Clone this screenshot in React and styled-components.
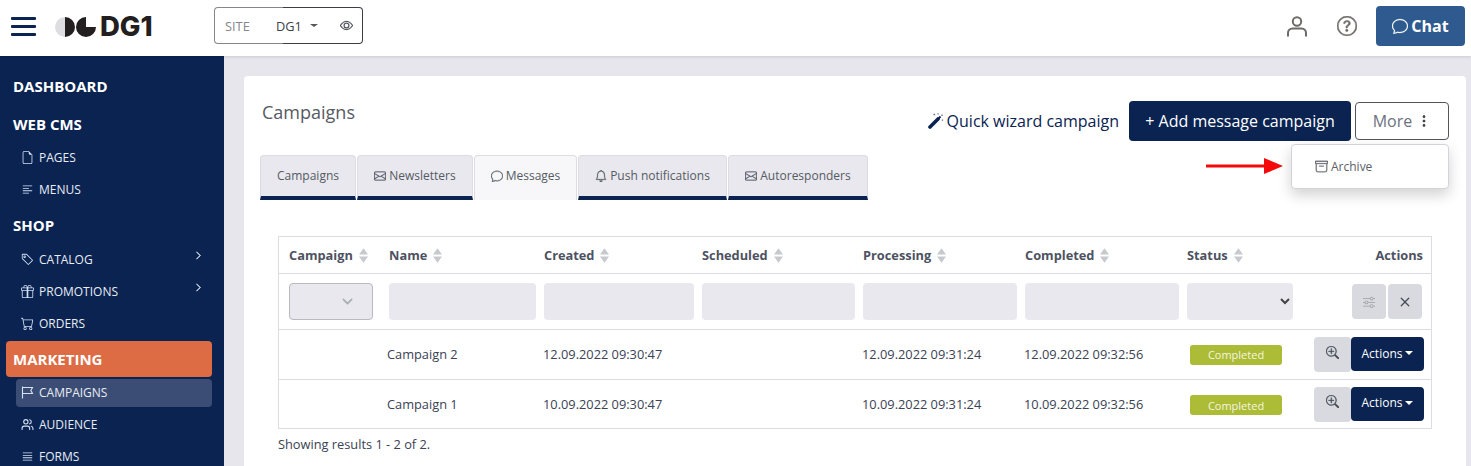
import React from "react";
import styled, { createGlobalStyle } from "styled-components";
import { Users } from "lucide-react";
import {
  BsArchive,
  BsBell,
  BsCart,
  BsChat,
  BsChevronDown,
  BsChevronRight,
  BsEnvelope,
  BsEye,
  BsFileEarmark,
  BsGift,
  BsJustify,
  BsQuestionCircle,
  BsSliders,
  BsTag,
  BsTextLeft,
  BsThreeDotsVertical,
  BsX,
  BsZoomIn
} from "react-icons/bs";

const NAVY = "#0a2351";

const GlobalStyle = createGlobalStyle`
  html, body {
    margin: 0;
    height: 466px;
    overflow: hidden;
    background: #e6e6ec;
    font-family: "Open Sans", "Noto Sans", sans-serif;
  }
  * {
    box-sizing: border-box;
  }
`;

const columns = ["Campaign", "Name", "Created", "Scheduled", "Processing", "Completed", "Status"];

const rows = [
  { name: "Campaign 2", created: "12.09.2022 09:30:47", processing: "12.09.2022 09:31:24", completed: "12.09.2022 09:32:56" },
  { name: "Campaign 1", created: "10.09.2022 09:30:47", processing: "10.09.2022 09:31:24", completed: "10.09.2022 09:32:56" }
];

const tabs = [
  { label: "Campaigns", width: 96 },
  { label: "Newsletters", icon: <BsEnvelope />, width: 116 },
  { label: "Messages", icon: <BsChat />, width: 103, active: true },
  { label: "Push notifications", icon: <BsBell />, width: 149 },
  { label: "Autoresponders", icon: <BsEnvelope />, width: 140 }
];

function SortIcon() {
  return (
    <SortSvg viewBox="0 0 10 16">
      <path d="M5 0 L10 7 H0 Z M5 16 L0 9 H10 Z" fill="#c8c9ce" />
    </SortSvg>
  );
}

function Logo() {
  return (
    <LogoWrap>
      <svg width="41" height="20" viewBox="0 0 41 20">
        <path d="M10 0 A10 10 0 0 0 10 20 Z" fill="#dedee2" />
        <path d="M10 0 A10 10 0 0 1 10 20 Z" fill="#231f20" />
        <path d="M31 0 A10 10 0 1 0 41 10 H31 Z" fill="#231f20" />
      </svg>
      <LogoText>DG1</LogoText>
    </LogoWrap>
  );
}

function UserIcon() {
  return (
    <svg width="20" height="21" viewBox="0 0 20 21" fill="none" stroke="currentColor" strokeWidth="2">
      <circle cx="10" cy="5.5" r="4.2" />
      <path d="M1 20.5 V17 a4.5 4.5 0 0 1 4.5-4.5 h9 a4.5 4.5 0 0 1 4.5 4.5 v3.5" />
    </svg>
  );
}

function FlagIcon() {
  return (
    <svg viewBox="0 0 13 13" fill="none" stroke="currentColor" strokeWidth="1.1">
      <path d="M1.5 0.5 V12.5 M1.5 1.5 H11.5 L9.8 4.5 L11.5 7.5 H1.5" />
    </svg>
  );
}

function WandIcon() {
  return (
    <svg width="16" height="16" viewBox="0 0 16 16">
      <path d="M2 14 L10 6" stroke={NAVY} strokeWidth="3.6" strokeLinecap="round" />
      <path d="M10 6 L12.5 3.5" stroke={NAVY} strokeWidth="2" />
      <path d="M5.5 1.5 h1.6 M9.5 0.8 h1.2 M14 1.5 v1.6 M14.5 6.5 v1.3" stroke="#5d6b88" strokeWidth="1.3" />
    </svg>
  );
}

export default function App() {
  return (
    <Page>
      <GlobalStyle />
      <Header>
        <Burger>
          <span />
          <span />
          <span />
        </Burger>
        <Logo />
        <SitePicker>
          <SiteLabel>SITE</SiteLabel>
          <SiteValue>DG1</SiteValue>
          <SiteCaret />
          <EyeIcon />
        </SitePicker>
        <HeaderRight>
          <HeaderIcon>
            <UserIcon />
          </HeaderIcon>
          <HeaderIcon>
            <HelpIcon />
          </HeaderIcon>
          <ChatButton>
            <BsChat />
            Chat
          </ChatButton>
        </HeaderRight>
      </Header>

      <Body>
        <Sidebar>
          <Heading $top={17}>DASHBOARD</Heading>
          <Heading $top={10}>WEB CMS</Heading>
          <NavItem $top={2}><BsFileEarmark />PAGES</NavItem>
          <NavItem><BsTextLeft />MENUS</NavItem>
          <Heading $top={7}>SHOP</Heading>
          <NavItem $top={3}><BsTag />CATALOG<NavChevron /></NavItem>
          <NavItem><BsGift />PROMOTIONS<NavChevron /></NavItem>
          <NavItem><BsCart />ORDERS</NavItem>
          <ActiveHeading>MARKETING</ActiveHeading>
          <ActiveItem><FlagIcon />CAMPAIGNS</ActiveItem>
          <NavItem $top={1}><Users strokeWidth={2} />AUDIENCE</NavItem>
          <NavItem><BsJustify />FORMS</NavItem>
        </Sidebar>

        <Main>
          <Card>
            <TopRow>
              <Title>Campaigns</Title>
              <TopActions>
                <WizardLink><WandIcon />Quick wizard campaign</WizardLink>
                <AddButton>+ Add message campaign</AddButton>
                <MoreWrap>
                  <MoreButton>More<BsThreeDotsVertical /></MoreButton>
                  <Arrow width="78" height="16" viewBox="0 0 78 16">
                    <path d="M1 8 H58" stroke="#f40a0a" strokeWidth="3" strokeLinecap="round" />
                    <path d="M58 0 L77 8 L58 16 Z" fill="#f40a0a" />
                  </Arrow>
                  <Dropdown>
                    <BsArchive />
                    Archive
                  </Dropdown>
                </MoreWrap>
              </TopActions>
            </TopRow>

            <Tabs>
              {tabs.map((tab) => (
                <Tab key={tab.label} $active={tab.active} $width={tab.width}>
                  {tab.icon}
                  {tab.label}
                </Tab>
              ))}
            </Tabs>

            <Table>
              <HeadRow>
                {columns.map((col) => (
                  <HeadCell key={col}>
                    {col}
                    <SortIcon />
                  </HeadCell>
                ))}
                <ActionsHead>Actions</ActionsHead>
              </HeadRow>
              <FilterRow>
                <FilterCell>
                  <CampaignSelect>
                    <BsChevronDown />
                  </CampaignSelect>
                </FilterCell>
                <FilterCell><FilterInput /></FilterCell>
                <FilterCell><FilterInput /></FilterCell>
                <FilterCell><FilterInput /></FilterCell>
                <FilterCell><FilterInput /></FilterCell>
                <FilterCell><FilterInput /></FilterCell>
                <FilterCell><StatusSelect /></FilterCell>
                <FilterButtons>
                  <GrayButton $muted><BsSliders /></GrayButton>
                  <GrayButton><BsX /></GrayButton>
                </FilterButtons>
              </FilterRow>
              {rows.map((row) => (
                <DataRow key={row.name}>
                  <DataCell />
                  <NameCell>{row.name}</NameCell>
                  <DataCell>{row.created}</DataCell>
                  <DataCell />
                  <DataCell>{row.processing}</DataCell>
                  <DataCell>{row.completed}</DataCell>
                  <DataCell><StatusBadge>Completed</StatusBadge></DataCell>
                  <RowButtons>
                    <ZoomButton><BsZoomIn /></ZoomButton>
                    <ActionsButton>Actions<Caret /></ActionsButton>
                  </RowButtons>
                </DataRow>
              ))}
            </Table>
            <Results>Showing results 1 - 2 of 2.</Results>
          </Card>
        </Main>
      </Body>
    </Page>
  );
}

const Page = styled.div`
  width: 1471px;
  height: 466px;
  overflow: hidden;
`;

const Header = styled.header`
  position: relative;
  z-index: 2;
  display: flex;
  align-items: center;
  height: 56px;
  padding: 0 6px 0 11px;
  background: #fff;
  box-shadow: 0 1px 3px rgba(0, 0, 0, 0.12);
`;

const Burger = styled.div`
  display: flex;
  flex-direction: column;
  gap: 5.5px;
  width: 25px;
  margin-bottom: 3px;

  span {
    height: 2.5px;
    background: ${NAVY};
    border-radius: 1px;
  }
`;

const LogoWrap = styled.div`
  display: flex;
  align-items: center;
  gap: 4px;
  width: 100px;
  margin: 0 0 2px 19px;
`;

const LogoText = styled.span`
  font-family: "Inter", sans-serif;
  font-weight: 800;
  font-size: 27.5px;
  line-height: 1;
  color: #231f20;
`;

const SitePicker = styled.div`
  display: flex;
  align-items: center;
  width: 149px;
  height: 37px;
  margin: 0 0 5px 59px;
  padding-left: 10px;
  border: 1px solid transparent;
  border-radius: 4px;
  background:
    linear-gradient(#fff, #fff) padding-box,
    linear-gradient(90deg, #85868c 0 46%, #3d3e44 46%) border-box;
`;

const SiteLabel = styled.span`
  width: 51px;
  font-size: 12.8px;
  color: #85878d;
`;

const SiteValue = styled.span`
  font-size: 12.8px;
  color: #3d4048;
`;

const Caret = styled.span`
  display: inline-block;
  margin-left: 3px;
  border-top: 4px solid currentColor;
  border-left: 4px solid transparent;
  border-right: 4px solid transparent;
`;

const SiteCaret = styled(Caret)`
  margin-left: 8px;
  border-top-width: 3px;
  color: #55575d;
`;

const EyeIcon = styled(BsEye)`
  margin-left: 22px;
  font-size: 13px;
  color: #3d4048;
  stroke: currentColor;
  stroke-width: 0.3;
`;

const HeaderRight = styled.div`
  display: flex;
  align-items: center;
  margin: 0 0 4px auto;
`;

const HeaderIcon = styled.span`
  display: flex;
  justify-content: center;
  width: 50px;
  color: #6e6a68;
`;

const HelpIcon = styled(BsQuestionCircle)`
  font-size: 20px;
  stroke: currentColor;
  stroke-width: 0.4;
`;

const ChatButton = styled.button`
  display: flex;
  align-items: center;
  justify-content: center;
  gap: 3px;
  width: 89px;
  height: 40px;
  margin-left: 4px;
  border: none;
  border-radius: 4px;
  background: #2f5a8f;
  color: #fff;
  font-family: inherit;
  font-size: 16px;
  font-weight: 700;

  svg {
    font-size: 16px;
    stroke: currentColor;
    stroke-width: 0.2;
  }
`;

const Body = styled.div`
  display: flex;
  height: 410px;
`;

const Sidebar = styled.nav`
  flex: 0 0 224px;
  padding: 0 12px 0 6px;
  background: ${NAVY};
  color: #fff;
`;

const Heading = styled.div`
  display: flex;
  align-items: center;
  height: 28px;
  margin-top: ${(props) => props.$top || 0}px;
  padding: 0 0 2px 7px;
  font-size: 15px;
  font-weight: 700;
`;

const ActiveHeading = styled(Heading)`
  height: 36px;
  margin-top: 2px;
  padding-bottom: 0;
  background: #dd6b44;
  border-radius: 4px;
`;

const NavItem = styled.div`
  display: flex;
  align-items: center;
  position: relative;
  height: 32px;
  margin-top: ${(props) => props.$top || 0}px;
  padding-left: 15px;
  font-size: 12px;
  color: #e8ecf4;

  & > svg:first-child {
    flex: none;
    width: 13px;
    height: 13px;
    margin-right: 5px;
    color: #d5e2f5;
  }
`;

const ActiveItem = styled(NavItem)`
  height: 28px;
  margin: 2px 0 0 10px;
  padding: 0 0 2px 5px;
  background: #3b4d75;
  border-radius: 4px;
`;

const NavChevron = styled(BsChevronRight)`
  position: absolute;
  right: 9px;
  top: 8px;
  width: 9px;
  height: 9px;
  stroke: currentColor;
  stroke-width: 1;
`;

const Main = styled.main`
  flex: 1;
  padding: 20px 5px 0 20px;
`;

const Card = styled.section`
  height: 100%;
  padding: 0 16px;
  background: #fff;
  border-radius: 4px 4px 0 0;
`;

const TopRow = styled.div`
  display: flex;
  justify-content: space-between;
  height: 79px;
`;

const Title = styled.h1`
  margin: 24px 0 0 2px;
  font-size: 18px;
  font-weight: 400;
  line-height: 24px;
  color: #555a63;
`;

const TopActions = styled.div`
  display: flex;
  align-items: flex-start;
  margin-top: 25px;
  margin-right: 1px;
`;

const WizardLink = styled.a`
  display: flex;
  align-items: center;
  gap: 3px;
  height: 40px;
  font-size: 16px;
  color: ${NAVY};
`;

const AddButton = styled.button`
  width: 222px;
  height: 40px;
  margin-left: 10px;
  border: none;
  border-radius: 4px;
  background: ${NAVY};
  color: #fff;
  font-family: inherit;
  font-size: 16px;
`;

const MoreWrap = styled.div`
  position: relative;
  margin-left: 4px;
`;

const MoreButton = styled.button`
  display: flex;
  align-items: center;
  justify-content: center;
  gap: 5px;
  width: 94px;
  height: 38px;
  margin-top: 1px;
  border: 1px solid #54555a;
  border-radius: 4px;
  background: #fff;
  color: #6c7180;
  font-family: inherit;
  font-size: 16px;

  svg {
    font-size: 14px;
    color: #444;
    stroke: currentColor;
    stroke-width: 0.2;
  }
`;

const Arrow = styled.svg`
  position: absolute;
  top: 57px;
  left: -149px;
`;

const Dropdown = styled.div`
  position: absolute;
  top: 43px;
  right: 0;
  z-index: 3;
  display: flex;
  align-items: center;
  gap: 3px;
  width: 158px;
  height: 45px;
  padding-left: 23px;
  border: 1px solid #d3d3d9;
  border-radius: 4px;
  background: #fff;
  box-shadow: 0 6px 14px rgba(0, 0, 0, 0.18);
  font-size: 12px;
  color: #5c6068;

  svg {
    font-size: 13px;
    stroke: currentColor;
    stroke-width: 0.3;
  }
`;

const Tabs = styled.div`
  display: flex;
  gap: 1px;
`;

const Tab = styled.div`
  display: flex;
  align-items: center;
  justify-content: center;
  gap: 3px;
  width: ${(props) => props.$width}px;
  height: 45px;
  padding-bottom: ${(props) => (props.$active ? "5px" : "1px")};
  border: 1px solid #dcdce2;
  border-bottom: ${(props) => (props.$active ? "none" : `4px solid ${NAVY}`)};
  border-radius: 4px 4px 0 0;
  background: ${(props) => (props.$active ? "#f7f7f9" : "#e8e8ee")};
  font-size: 12px;
  color: #555a63;

  svg {
    font-size: 12px;
    stroke: currentColor;
    stroke-width: 0.3;
  }
`;

const Table = styled.div`
  margin: 36px 0 0 18px;
  width: 1154px;
  border: 1px solid #dcdce2;
  color: #3a4254;
`;

const Row = styled.div`
  display: grid;
  grid-template-columns: 102px 155px 158px 161px 162px 162px 114px 1fr;
  align-items: center;
`;

const HeadRow = styled(Row)`
  height: 37px;
  border-bottom: 1px solid #dcdce2;
`;

const HeadCell = styled.div`
  display: flex;
  align-items: center;
  gap: 6px;
  padding-left: 8px;
  font-size: 12.8px;
  font-weight: 700;
  color: #4d5261;

  &:first-child {
    padding-left: 10px;
  }
`;

const SortSvg = styled.svg`
  width: 9px;
  height: 15px;
`;

const ActionsHead = styled(HeadCell)`
  justify-content: flex-end;
  padding-right: 8px;
`;

const FilterRow = styled(Row)`
  height: 56px;
  border-bottom: 1px solid #dcdce2;
`;

const FilterCell = styled.div`
  padding-left: 8px;

  &:first-child {
    padding-left: 10px;
  }
`;

const CampaignSelect = styled.div`
  display: flex;
  align-items: center;
  justify-content: flex-end;
  width: 84px;
  height: 37px;
  padding-right: 19px;
  background: #e8e8ee;
  border: 1px solid #b9bac0;
  border-radius: 4px;
  font-size: 11px;
  color: #a9b0b4;

  svg {
    stroke: currentColor;
    stroke-width: 1.5;
  }
`;

const FilterInput = styled.input`
  display: block;
  width: 100%;
  height: 37px;
  border: none;
  border-radius: 4px;
  background: #e8e8ee;
`;

const StatusSelect = styled.select`
  display: block;
  width: 106px;
  height: 37px;
  border: none;
  border-radius: 4px;
  background-color: #e8e8ee;
  color: #444;
`;

const FilterButtons = styled.div`
  display: flex;
  justify-content: flex-end;
  gap: 2px;
  padding-right: 9px;
`;

const GrayButton = styled.button`
  display: flex;
  align-items: center;
  justify-content: center;
  width: 34px;
  height: 35px;
  padding: 0;
  border: none;
  border-radius: 4px;
  background: #d9dadf;
  color: ${(props) => (props.$muted ? "#9a9ca2" : "#444a58")};
  font-size: ${(props) => (props.$muted ? "12px" : "20px")};
`;

const ZoomButton = styled(GrayButton)`
  width: 37px;
  padding-bottom: 5px;
  font-size: 13px;

  svg {
    stroke: currentColor;
    stroke-width: 0.4;
  }
`;

const DataCell = styled.div`
  padding: 0 0 2px 7px;
  font-size: 12.8px;
  color: #3a4254;
`;

const NameCell = styled(DataCell)`
  padding-left: 6px;
`;

const DataRow = styled(Row)`
  height: 50px;
  border-bottom: 1px solid #dcdce2;

  &:last-child {
    height: 48px;
    border-bottom: none;

    ${DataCell} {
      padding-bottom: 0;
    }
  }
`;

const StatusBadge = styled.span`
  display: flex;
  align-items: center;
  justify-content: center;
  width: 92px;
  height: 20px;
  margin: 2px 0 0 4px;
  border-radius: 3px;
  background: #adbc36;
  color: #f4f6e0;
  font-size: 11px;
`;

const RowButtons = styled.div`
  display: flex;
  justify-content: flex-end;
  padding-right: 7px;
`;

const ActionsButton = styled.button`
  display: flex;
  align-items: center;
  justify-content: center;
  width: 73px;
  height: 34px;
  padding: 0 0 2px;
  border: none;
  border-radius: 4px;
  background: ${NAVY};
  color: #fff;
  font-family: inherit;
  font-size: 12px;
`;

const Results = styled.div`
  margin: 6px 0 0 18px;
  font-size: 12.8px;
  color: #3a4254;
`;
